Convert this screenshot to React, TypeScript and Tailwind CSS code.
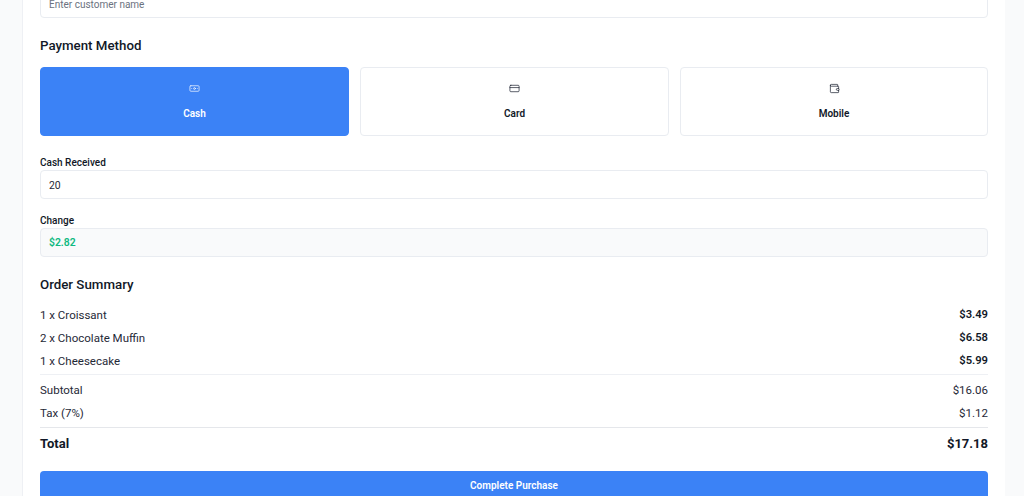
import { Banknote, CreditCard, Wallet } from "lucide-react";

function Row({ a, b, strong }: { a: string; b: string; strong?: boolean }) {
  return (
    <div className="flex h-[23px] items-center justify-between text-[11.5px] text-[#1f2937]">
      <span>{a}</span>
      <span className={strong ? "text-[11.2px] font-semibold text-[#111827]" : ""}>{b}</span>
    </div>
  );
}

function Method({ label, active, children }: { label: string; active?: boolean; children: React.ReactNode }) {
  return (
    <div
      className={
        "flex h-[69px] flex-col items-center rounded-[4px] border pt-[15px] " +
        (active ? "border-[#3b82f6] bg-[#3b82f6] text-white" : "border-[#e9ecf1] bg-white text-[#111827]")
      }
    >
      {children}
      <span className="mt-[12px] text-[10px] leading-[16px] font-semibold">{label}</span>
    </div>
  );
}

export default function App() {
  return (
    <div className="h-[496px] overflow-hidden bg-[#f9fafb] font-['Roboto',sans-serif]">
      <div className="mr-[19px] ml-[22px] -mt-[29px] border-l border-[#eef0f4] bg-white pt-[18px] pr-[17px] pl-[17px]">
        <div className="flex h-[29px] items-center rounded-[4px] border border-[#e9ecf1] px-[8px] pt-[2px] text-[10px] text-[#6b7280]">
          Enter customer name
        </div>
        <h2 className="mt-[17px] h-[21px] text-[13.3px] leading-[21px] font-medium text-[#111827]">Payment Method</h2>
        <div className="mt-[11px] grid grid-cols-[309px_309px_1fr] gap-[11px]">
          <Method label="Cash" active>
            <Banknote size={11} strokeWidth={1.5} />
          </Method>
          <Method label="Card">
            <CreditCard size={11} strokeWidth={1.5} />
          </Method>
          <Method label="Mobile">
            <Wallet size={11} strokeWidth={1.5} />
          </Method>
        </div>
        <div className="mt-[19px] h-[15px] text-[10px] leading-[15px] font-medium text-[#111827]">Cash Received</div>
        <div className="flex h-[29px] items-center rounded-[4px] border border-[#e9ecf1] px-[8px] pt-[2px] text-[10.4px] text-[#1f2937]">
          20
        </div>
        <div className="mt-[14px] h-[15px] text-[10px] leading-[15px] font-medium text-[#111827]">Change</div>
        <div className="flex h-[29px] items-center rounded-[4px] border border-[#e9ecf1] bg-[#f9fafb] px-[8px] text-[10.4px] font-semibold text-[#10b981]">
          $2.82
        </div>
        <h2 className="mt-[17px] h-[21px] text-[13.3px] leading-[21px] font-medium text-[#111827]">Order Summary</h2>
        <div className="mt-[9px]">
          <Row a="1 x Croissant" b="$3.49" strong />
          <Row a="2 x Chocolate Muffin" b="$6.58" strong />
          <Row a="1 x Cheesecake" b="$5.99" strong />
        </div>
        <div className="mt-[1px] mb-[4px] border-t border-[#eef0f4]" />
        <Row a="Subtotal" b="$16.06" />
        <Row a="Tax (7%)" b="$1.12" />
        <div className="mt-[2px] border-t border-[#e5e7eb]" />
        <div className="mt-[4px] flex h-[23px] items-center justify-between text-[13px] font-bold text-[#111827]">
          <span>Total</span>
          <span>$17.18</span>
        </div>
        <div className="mt-[16px] flex h-[29px] items-center justify-center rounded-[4px] bg-[#3b82f6] text-[10px] font-semibold text-white">
          Complete Purchase
        </div>
      </div>
    </div>
  );
}
